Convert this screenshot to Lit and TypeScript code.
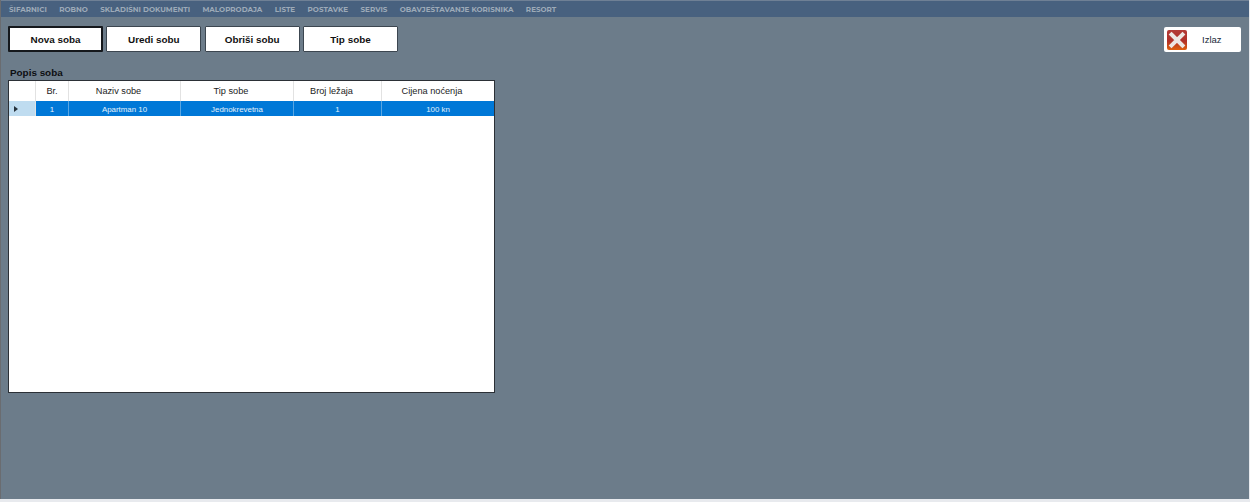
import { LitElement, html, css } from "lit";
import { customElement } from "lit/decorators.js";

const MENU = ["ŠIFARNICI", "ROBNO", "SKLADIŠNI DOKUMENTI", "MALOPRODAJA", "LISTE", "POSTAVKE", "SERVIS", "OBAVJEŠTAVANJE KORISNIKA", "RESORT"];
const COLS = [
  { name: "", w: 27 },
  { name: "Br.", w: 33 },
  { name: "Naziv sobe", w: 112 },
  { name: "Tip sobe", w: 113 },
  { name: "Broj ležaja", w: 88 },
  { name: "Cijena noćenja", w: 112 },
];
const ROW = ["1", "Apartman 10", "Jednokrevetna", "1", "100 kn"];

@customElement("app-root")
export class AppRoot extends LitElement {
  static styles = css`
    :host { display: block; width: 1250px; height: 502px; overflow: hidden; background: #e8eaee; }
    .window { height: 499px; width: 1249px; background: #6c7c8a; display: flex; flex-direction: column; border-left: 1px solid #6a6c70; box-sizing: border-box; }
    .menu { height: 17px; box-sizing: border-box; background: #48617f; border-top: 1px solid #6f8095; display: flex; align-items: center; gap: 12.4px; padding-left: 8px; font: 700 7.18px Montserrat, "Open Sans", "Liberation Sans", sans-serif; color: #9daab8; white-space: nowrap; }
    .body { flex: 1; padding: 9px 8px 0 7px; display: flex; flex-direction: column; }
    .top { display: flex; justify-content: space-between; }
    .buttons { display: flex; gap: 3.33px; }
    .btn { width: 95px; height: 26px; box-sizing: border-box; background: #fff; border: 1px solid #3c4650; border-radius: 1px; display: flex; align-items: center; justify-content: center; font: 700 9.9px "Liberation Sans", Arial, sans-serif; color: #111; }
    .btn.primary { border: 2px solid #15181c; }
    .exit { width: 77px; height: 25px; margin-top: 1px; box-sizing: border-box; background: #fff; border-radius: 2px; display: flex; align-items: center; font: 400 9.5px "Liberation Sans", Arial, sans-serif; color: #1a2a3a; padding-left: 3px; }
    .exit svg { display: block; flex: none; }
    .exit span { margin-left: 15px; }
    .title { font: 700 9.9px "Liberation Sans", Arial, sans-serif; color: #0c0f12; margin-top: 15px; height: 11px; line-height: 11px; padding-left: 2px; }
    .grid { width: 487px; height: 313px; box-sizing: border-box; margin-top: 2px; background: #fff; border: 1px solid #2b3036; }
    .row { display: flex; }
    .head { height: 20px; box-sizing: border-box; }
    .head .cell { font: 400 9.2px "Liberation Sans", Arial, sans-serif; color: #1c1c1c; border-right: 1px solid #e2e2e2; padding-right: 12px; }
    .head .cell.short { padding-right: 0; }
    .head .cell:last-child { border-right: none; }
    .sel { height: 15px; background: #0078d7; }
    .cell { box-sizing: border-box; display: flex; align-items: center; justify-content: center; flex: none; }
    .sel .cell { font: 400 7.9px "Liberation Sans", Arial, sans-serif; color: #e6f2fb; border-right: 1px solid #5aa6e2; padding-top: 2px; }
    .sel .cell:last-child { border-right: none; }
    .sel .mark { background: #bfdcf0; border-right: 1px solid #e2e2e2; padding-top: 1px; }
    .mark svg { display: block; margin-right: 12px; }
  `;

  render() {
    return html`
      <div class="window">
        <nav class="menu">${MENU.map((m) => html`<span>${m}</span>`)}</nav>
        <div class="body">
          <div class="top">
            <div class="buttons">
              <div class="btn primary">Nova soba</div>
              <div class="btn">Uredi sobu</div>
              <div class="btn">Obriši sobu</div>
              <div class="btn">Tip sobe</div>
            </div>
            <div class="exit">
              <svg width="20" height="20" viewBox="0 0 20 20">
                <defs>
                  <linearGradient id="g" x1="0" y1="0" x2="0" y2="1">
                    <stop offset="0" stop-color="#b23a36" />
                    <stop offset="0.55" stop-color="#b03028" />
                    <stop offset="1" stop-color="#e0600c" />
                  </linearGradient>
                </defs>
                <rect x="0" y="0" width="20" height="20" rx="2" fill="url(#g)" />
                <path d="M4.5 4.5 L15.5 15.5 M15.5 4.5 L4.5 15.5" stroke="#ece6e2" stroke-width="4" stroke-linecap="square" />
              </svg>
              <span>Izlaz</span>
            </div>
          </div>
          <div class="title">Popis soba</div>
          <div class="grid">
            <div class="row head">
              ${COLS.map((c, i) => html`<div class="cell ${i < 2 ? "short" : ""}" style="width:${c.w}px">${c.name}</div>`)}
            </div>
            <div class="row sel">
              <div class="cell mark" style="width:${COLS[0].w}px">
                <svg width="4" height="6" viewBox="0 0 4 6"><path d="M0 0 L4 3 L0 6 Z" fill="#26323c" /></svg>
              </div>
              ${ROW.map((v, i) => html`<div class="cell" style="width:${COLS[i + 1].w}px">${v}</div>`)}
            </div>
          </div>
        </div>
      </div>
    `;
  }
}
